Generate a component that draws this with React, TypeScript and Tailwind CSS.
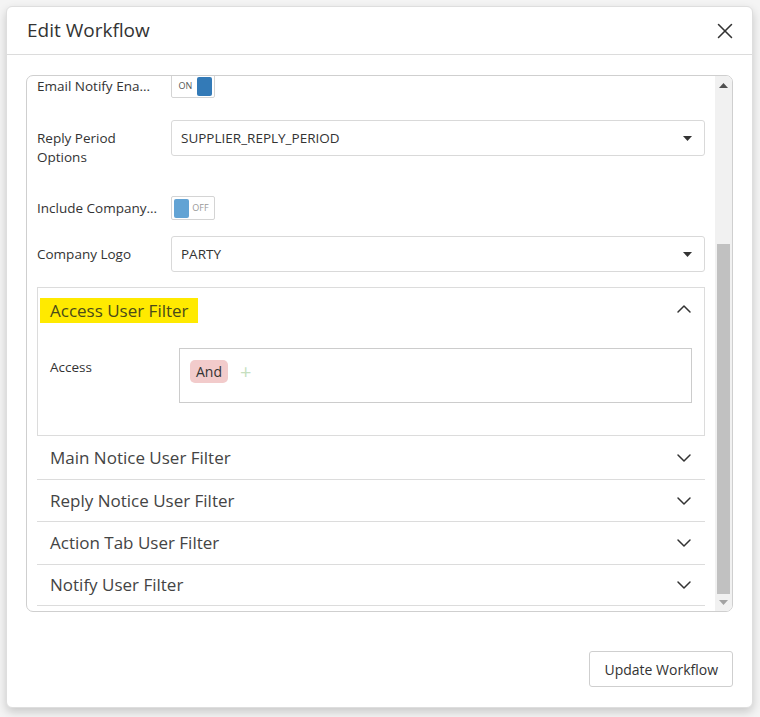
import { ChevronDown, ChevronUp, X } from "lucide-react";

const font = { fontFamily: '"Open Sans", "Noto Sans", sans-serif' };

function Caret() {
  return (
    <svg width="9" height="5" viewBox="0 0 9 5" className="shrink-0">
      <path d="M0 0 H9 L4.5 5 Z" fill="#333" />
    </svg>
  );
}

function Toggle({ on }: { on: boolean }) {
  return (
    <div className="flex h-[24px] w-[44px] items-center rounded-[2px] border border-[#d4d4d4] bg-white px-[2px]">
      {on ? (
        <>
          <span className="flex-1 text-center text-[9px] text-[#555]">ON</span>
          <span className="h-[19px] w-[15px] rounded-[2px] bg-[#337ab7]" />
        </>
      ) : (
        <>
          <span className="h-[19px] w-[15px] rounded-[2px] bg-[#62a3d4]" />
          <span className="flex-1 text-center text-[9px] text-[#999]">OFF</span>
        </>
      )}
    </div>
  );
}

function Select({ value }: { value: string }) {
  return (
    <div className="flex h-[36px] flex-1 items-center justify-between rounded-[3px] border border-[#d9d9d9] bg-white pl-[9px] pr-[12px] text-[13.5px] text-[#333]">
      <span>{value}</span>
      <Caret />
    </div>
  );
}

const collapsed = [
  { title: "Main Notice User Filter", h: "h-[44px]" },
  { title: "Reply Notice User Filter", h: "h-[42px]" },
  { title: "Action Tab User Filter", h: "h-[43px]" },
  { title: "Notify User Filter", h: "h-[41px]" },
];

export default function App() {
  return (
    <div className="min-h-[717px] bg-[#f4f4f4] pl-[6px] pt-[6px]" style={font}>
      <div className="flex h-[702px] w-[747px] flex-col rounded-[6px] border border-[#dedede] bg-white shadow-[0_4px_10px_rgba(0,0,0,0.18)]">
        {/* header */}
        <div className="flex h-[48px] items-center justify-between border-b border-[#dcdcdc] pl-[20px] pr-[14px]">
          <h1 className="text-[19px] text-[#333]">Edit Workflow</h1>
          <X className="h-[26px] w-[26px] text-[#333]" strokeWidth={1.4} />
        </div>

        {/* body */}
        <div className="px-[19px] pt-[20px]">
          <div className="flex h-[537px] overflow-hidden rounded-[7px] border border-[#cfcfcf]">
            <div className="flex-1 overflow-hidden pl-[10px] pr-[10px] text-[13.5px] text-[#333]">
              {/* Email notify */}
              <div className="-mt-[2px] flex h-[24px] items-center">
                <span className="w-[134px]">Email Notify Ena...</span>
                <Toggle on />
              </div>

              {/* reply period */}
              <div className="mt-[22px] flex items-start">
                <span className="w-[134px] pt-[9px] leading-[19px]">
                  Reply Period
                  <br />
                  Options
                </span>
                <Select value="SUPPLIER_REPLY_PERIOD" />
              </div>

              {/* include company */}
              <div className="mt-[29px] flex items-center">
                <span className="w-[134px]">Include Company...</span>
                <Toggle on={false} />
              </div>

              {/* company logo */}
              <div className="mt-[16px] flex items-center">
                <span className="w-[134px]">Company Logo</span>
                <Select value="PARTY" />
              </div>

              {/* accordion */}
              <div className="mt-[15px]">
                <div className="border border-[#dcdcdc] pb-[32px]">
                  <div className="flex h-[45px] items-start justify-between pl-[2px] pr-[8px] pt-[10px]">
                    <span className="bg-[#ffea00] pl-[10px] pr-[9px] text-[17px] leading-[25px] text-[#4a4a1a]">
                      Access User Filter
                    </span>
                    <ChevronUp className="-mt-[1px] h-[24px] w-[24px] text-[#333]" strokeWidth={1.5} />
                  </div>
                  <div className="mt-[15px] flex pl-[12px] pr-[12px]">
                    <span className="w-[129px] pt-[9px]">Access</span>
                    <div className="flex h-[55px] flex-1 items-start gap-[12px] border border-[#cccccc] pl-[10px] pt-[11px]">
                      <span className="rounded-[5px] bg-[#f2cbcb] px-[6px] text-[14px] leading-[23px] text-[#333]">
                        And
                      </span>
                      <span className="text-[20px] leading-[23px] text-[#c6dfc0]">+</span>
                    </div>
                  </div>
                </div>
                {collapsed.map((c) => (
                  <div
                    key={c.title}
                    className={`flex ${c.h} items-center justify-between border-b border-[#dcdcdc] pl-[13px] pr-[9px]`}
                  >
                    <span className="text-[17px] text-[#444]">{c.title}</span>
                    <ChevronDown className="h-[24px] w-[24px] text-[#333]" strokeWidth={1.5} />
                  </div>
                ))}
              </div>
            </div>

            {/* scrollbar */}
            <div className="flex w-[17px] flex-col items-center bg-[#f1f1f1]">
              <svg width="9" height="5" viewBox="0 0 9 5" className="mt-[7px]">
                <path d="M0 5 H9 L4.5 0 Z" fill="#505050" />
              </svg>
              <div className="mt-[156px] h-[350px] w-[13px] bg-[#c1c1c1]" />
              <svg width="9" height="5" viewBox="0 0 9 5" className="mt-[6px]">
                <path d="M0 0 H9 L4.5 5 Z" fill="#a3a3a3" />
              </svg>
            </div>
          </div>
        </div>

        {/* footer */}
        <div className="mt-auto flex justify-end pb-[20px] pr-[19px]">
          <button className="h-[36px] rounded-[3px] border border-[#cfcfcf] bg-white px-[14px] text-[14px] text-[#333]">
            Update Workflow
          </button>
        </div>
      </div>
    </div>
  );
}
